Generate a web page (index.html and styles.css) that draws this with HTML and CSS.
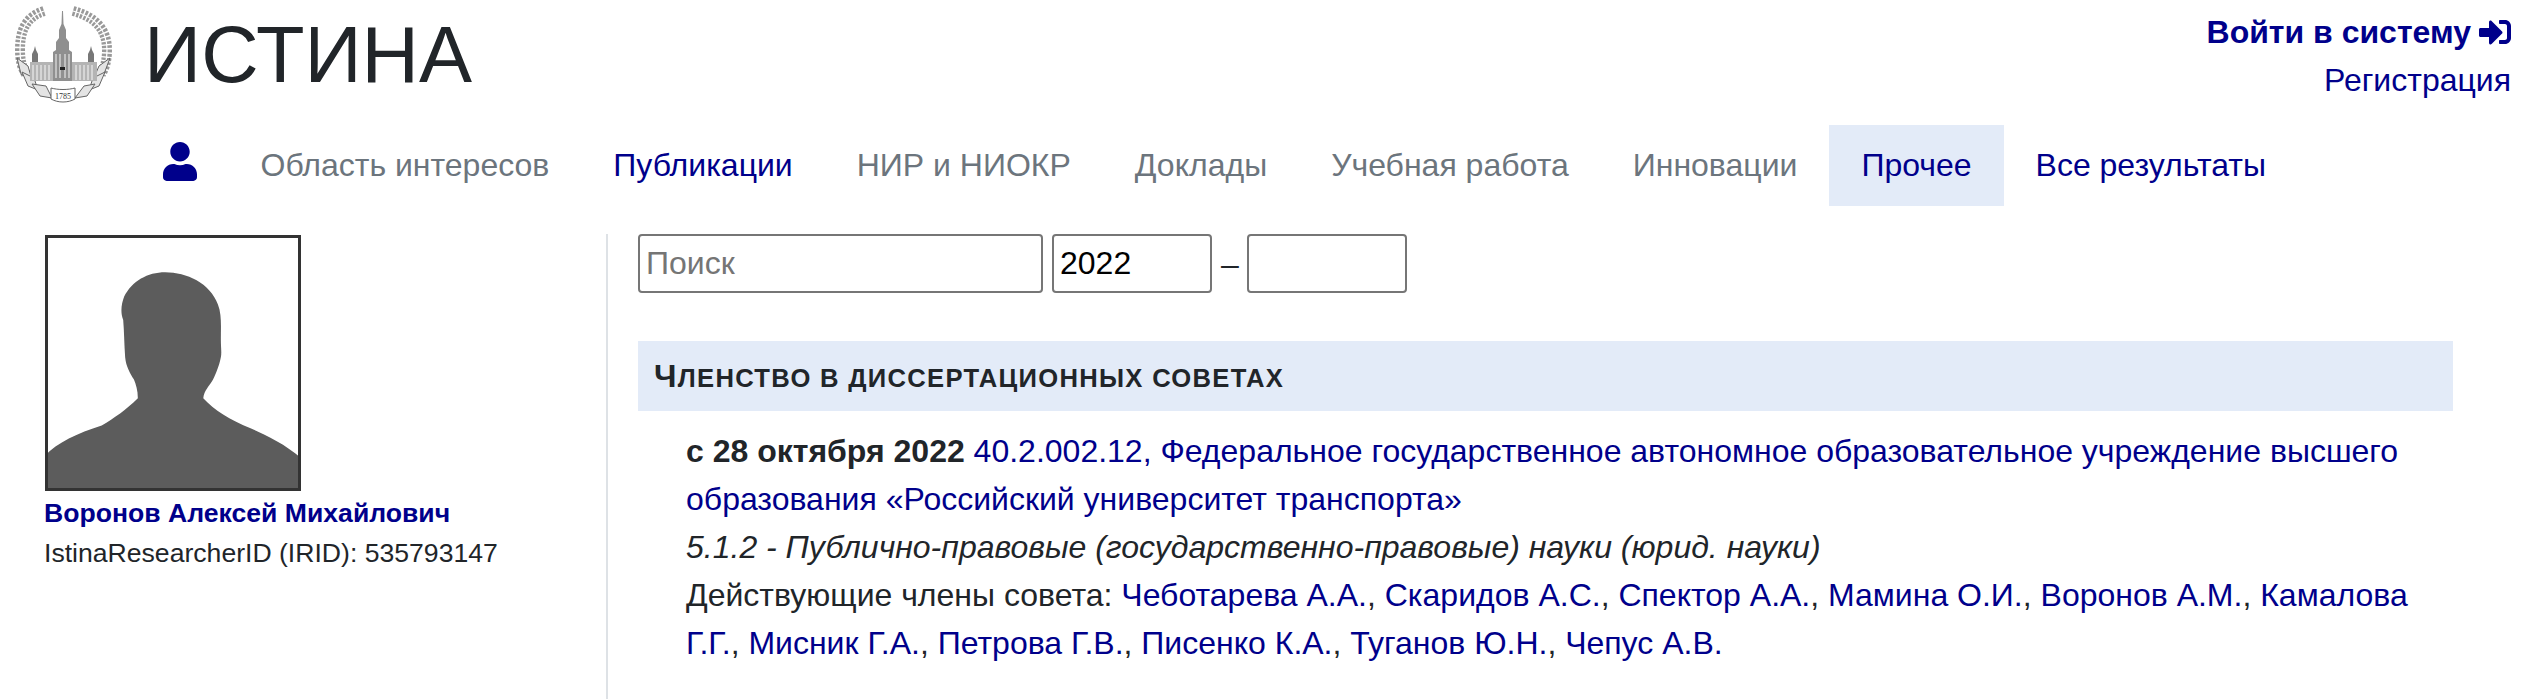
FILE: index.html
```html
<!DOCTYPE html>
<html lang="ru">
<head>
    <meta charset="UTF-8">
    <title>ИСТИНА</title>
    <link rel="stylesheet" href="styles.css">
</head>
<body>
    <header class="top">
        <div class="brand">
            <svg class="logo" viewBox="0 0 125 110" width="125" height="110" aria-hidden="true">
                <!-- венок -->
                <g fill="none">
                    <path stroke="#999" stroke-width="10" stroke-dasharray="2.500 1.500" d="M44 11 C26 17 20 30 20 50 C20 60 22 68 26 74"/>
                    <path stroke="#999" stroke-width="10" stroke-dasharray="2.500 1.500" d="M73 11 C96 17 107 30 107 50 C107 60 105 68 101 74"/>
                    <path stroke="#fff" stroke-width="1.200" d="M44 11 C26 17 20 30 20 50 C20 60 22 68 26 74"/>
                    <path stroke="#fff" stroke-width="1.200" d="M73 11 C96 17 107 30 107 50 C107 60 105 68 101 74"/>
                </g>
                <g fill="#e4e4e4" stroke="#666" stroke-width="1">
                    <path d="M17 58 L28 66 L32 80 L21 74Z"/>
                    <path d="M110 58 L99 66 L93 80 L104 74Z"/>
                    <path d="M22 72 L34 78 L38 90 L28 86Z"/>
                    <path d="M105 72 L93 78 L89 90 L99 86Z"/>
                    <path d="M32 84 L46 86 L52 98 L40 96Z"/>
                    <path d="M95 84 L84 86 L75 98 L87 96Z"/>
                </g>
                <!-- здание -->
                <g fill="#b4b4b4">
                    <rect x="30" y="62" width="24" height="19"/>
                    <rect x="72" y="62" width="25" height="19"/>
                </g>
                <path fill="#777" d="M32 62 V54 L34 50 L35 46 L36 50 L38 54 V62Z M88 62 V54 L90 50 L91 46 L92 50 L94 54 V62Z"/>
                <path fill="#8f8f8f" d="M62 11 L63 11 L63.500 24 L66 30 L66 38 L69 42 L69 50 L72 52 L72 81 L53 81 L53 52 L56 50 L56 42 L59 38 L59 30 L61.500 24Z"/>
                <g stroke="#fff" stroke-width="0.900">
                    <path d="M33 65 V80 M37 65 V80 M41 65 V80 M45 65 V80 M49 65 V80 M76 65 V80 M80 65 V80 M84 65 V80 M88 65 V80 M92 65 V80"/>
                    <path d="M56 54 V78 M60 54 V78 M65 54 V78 M69 54 V78"/>
                </g>
                <rect x="60" y="67" width="5" height="3" fill="#222"/>
                <path fill="#fff" stroke="#666" stroke-width="1" d="M51 88 C58 90 68 90 75 88 L75 99 C68 103 58 103 51 99Z"/>
                <text class="logo-year" x="63" y="99" text-anchor="middle">1785</text>
            </svg>
            <a class="site-name" href="#">ИСТИНА</a>
        </div>
        <div class="auth">
            <a class="login" href="#">Войти в систему
                <svg viewBox="0 0 512 512" width="32" height="32" aria-hidden="true"><path fill="currentColor" d="M416 448h-84c-6.600 0-12-5.400-12-12v-40c0-6.600 5.400-12 12-12h84c17.700 0 32-14.300 32-32V160c0-17.700-14.300-32-32-32h-84c-6.600 0-12-5.400-12-12V76c0-6.600 5.400-12 12-12h84c53 0 96 43 96 96v192c0 53-43 96-96 96zm-47-201L201 79c-15-15-41-4.500-41 17v96H24c-13.300 0-24 10.700-24 24v96c0 13.300 10.700 24 24 24h136v96c0 21.500 26 32 41 17l168-168c9.300-9.400 9.300-24.600 0-34z"/></svg>
            </a>
            <a class="register" href="#">Регистрация</a>
        </div>
    </header>

    <nav class="tabs">
        <a class="tab tab-icon" href="#">
            <svg viewBox="0 0 448 512" width="34" height="39" aria-hidden="true"><path fill="currentColor" d="M224 256c70.700 0 128-57.300 128-128S294.700 0 224 0 96 57.300 96 128s57.300 128 128 128zm89.600 32h-16.700c-22.200 10.200-46.900 16-72.900 16s-50.600-5.800-72.900-16h-16.700C60.200 288 0 348.200 0 422.400V464c0 26.500 21.500 48 48 48h352c26.500 0 48-21.500 48-48v-41.600c0-74.200-60.200-134.400-134.400-134.400z"/></svg>
        </a>
        <a class="tab muted" href="#">Область интересов</a>
        <a class="tab" href="#">Публикации</a>
        <a class="tab muted" href="#">НИР и НИОКР</a>
        <a class="tab muted" href="#">Доклады</a>
        <a class="tab muted" href="#">Учебная работа</a>
        <a class="tab muted" href="#">Инновации</a>
        <a class="tab active" href="#">Прочее</a>
        <a class="tab" href="#">Все результаты</a>
    </nav>

    <div class="layout">
        <aside class="side">
            <svg class="photo" viewBox="0 0 256 256" preserveAspectRatio="none" aria-hidden="true">
                <defs>
                    <filter id="soft"><feGaussianBlur stdDeviation="0.8"/></filter>
                </defs>
                <path fill="#5b5b5b" filter="url(#soft)" d="M-4 224 C8 210 30 200 55 192 C68 184 80 176 92 164 C92 156 90 150 88 145 C84 138 80 132 79 122 C78 108 78 96 77 84 C74 76 75 68 78 60 C86 44 102 35 120 35 C142 35 166 46 174 68 C178 78 177 90 177 104 C177 112 178 118 177 122 C175 132 172 138 169 145 C165 152 160 156 159 164 C170 176 186 186 208 195 C226 203 244 212 260 226 V260 H-4Z"/>
            </svg>
            <a class="person" href="#">Воронов Алексей Михайлович</a>
            <div class="irid">IstinaResearcherID (IRID): 535793147</div>
        </aside>

        <main class="content">
            <form class="filter">
                <input class="field field-search" type="text" placeholder="Поиск">
                <input class="field field-year" type="text" value="2022">
                <span class="dash">–</span>
                <input class="field field-year" type="text">
            </form>

            <h2 class="section-title">Членство в диссертационных советах</h2>

            <div class="entry">
                <strong>с 28 октября 2022</strong>
                <a href="#">40.2.002.12, Федеральное государственное автономное образовательное учреждение высшего образования «Российский университет транспорта»</a><br>
                <em>5.1.2 - Публично-правовые (государственно-правовые) науки (юрид. науки)</em><br>
                Действующие члены совета:
                <a href="#">Чеботарева А.А.</a>,
                <a href="#">Скаридов А.С.</a>,
                <a href="#">Спектор А.А.</a>,
                <a href="#">Мамина О.И.</a>,
                <a href="#">Воронов А.М.</a>,
                <a href="#">Камалова Г.Г.</a>,
                <a href="#">Мисник Г.А.</a>,
                <a href="#">Петрова Г.В.</a>,
                <a href="#">Писенко К.А.</a>,
                <a href="#">Туганов Ю.Н.</a>,
                <a href="#">Чепус А.В.</a>
            </div>
        </main>
    </div>
</body>
</html>
```

FILE: styles.css
```css
* {
    box-sizing: border-box;
}
html, body {
    height: 100%;
}
body {
    margin: 0;
    overflow: hidden;
    font-family: "Liberation Sans", Arial, sans-serif;
    font-size: 32px;
    line-height: 48px;
    color: #212529;
    background: #fff;
}
a {
    color: #00008b;
    text-decoration: none;
}

/* шапка */
.top {
    display: flex;
    justify-content: space-between;
    height: 125px;
    padding: 0 14px 0 0;
}
.brand {
    display: flex;
    align-items: flex-start;
    gap: 19px;
}
.logo-year {
    font-family: "Liberation Serif", serif;
    font-size: 8px;
    fill: #333;
}
.site-name {
    margin-top: 11px;
    font-size: 79.5px;
    line-height: 88px;
    color: #212529;
}
.auth {
    display: flex;
    flex-direction: column;
    align-items: flex-end;
    padding-top: 8px;
}
.login {
    display: flex;
    align-items: center;
    gap: 8px;
    font-weight: bold;
}

/* вкладки */
.tabs {
    display: flex;
    padding-left: 130.5px;
    height: 81px;
}
.tab {
    display: block;
    padding: 16px 32px;
}
.tab-icon {
    padding-top: 17px;
}
.muted {
    color: #6c757d;
}
.active {
    background: #e3ebf8;
}

/* колонки */
.layout {
    display: flex;
    padding-top: 28px;
    padding-left: 44px;
}
.side {
    width: 563px;
    font-size: 26.6px;
    line-height: 40px;
}
.photo {
    display: block;
    width: 256px;
    height: 256px;
    margin: 1px 0 2px 1px;
    border: 3px solid #333;
    background: #fff;
}
.person {
    display: block;
    font-weight: bold;
}
.content {
    flex: 1;
    margin-right: 72px;
    margin-left: -1px;
    padding-left: 30px;
    padding-bottom: 40px;
    border-left: 2px solid #dee2e6;
}
.filter {
    display: flex;
    align-items: center;
    gap: 9px;
    margin-bottom: 48px;
}
.field {
    height: 59px;
    padding: 0 6px;
    font: inherit;
    color: #000;
    border: 2px solid #767676;
    border-radius: 4px;
}
.field-search {
    width: 405px;
}
.field-year {
    width: 160px;
}
.field::placeholder {
    color: #757575;
}
.dash {
    margin-right: -1px;
}
.section-title {
    margin: 0 0 16px;
    padding: 16px 16px 14px;
    font-size: 25.6px;
    line-height: 38px;
    font-weight: bold;
    letter-spacing: 1.3px;
    text-transform: uppercase;
    background: #e3ebf8;
}
.section-title::first-letter {
    font-size: 32px;
}
.entry {
    padding-left: 48px;
}
```
